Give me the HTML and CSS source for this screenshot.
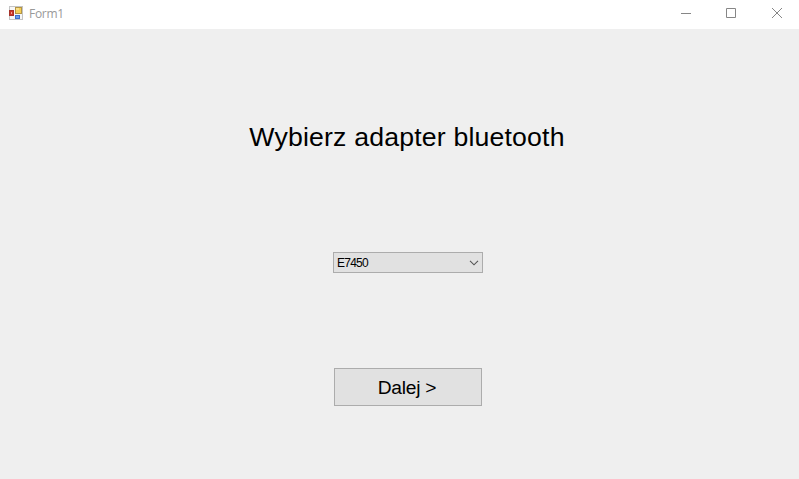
FILE: index.html
```html
<!DOCTYPE html>
<html lang="pl">
<head>
<meta charset="utf-8">
<title>Form1</title>
<link rel="stylesheet" href="styles.css">
</head>
<body>
<div class="window">
  <header class="titlebar">
    <svg class="app-icon" width="14" height="14" viewBox="0 0 14 14" shape-rendering="crispEdges">
      <rect x=".5" y=".5" width="13" height="13" fill="#f7f7f7" stroke="#c4c4c4"/>
      <rect x="6" y="1" width="7" height="7" fill="#b39545"/>
      <rect x="7" y="2" width="5" height="5" fill="#f6cf55"/>
      <rect x="7" y="2" width="3" height="2" fill="#fbe08a"/>
      <rect x="0" y="4" width="5" height="6" fill="#a5322a"/>
      <rect x="1" y="5" width="3" height="4" fill="#cf3527"/>
      <rect x="2" y="6" width="1" height="2" fill="#f0a293"/>
      <rect x="6" y="9" width="5" height="4" fill="#3d70cb"/>
      <rect x="7" y="10" width="3" height="2" fill="#6c9cec"/>
    </svg>
    <span class="title">Form1</span>
    <div class="controls">
      <svg width="46" height="28" viewBox="0 0 46 28"><path d="M18 13.5h10"/></svg>
      <svg width="46" height="28" viewBox="0 0 46 28"><path d="M17.5 8.5h9v9h-9z"/></svg>
      <svg width="46" height="28" viewBox="0 0 46 28"><path d="M17 8l10 10m0-10l-10 10"/></svg>
    </div>
  </header>
  <main class="form">
    <h1 class="heading">Wybierz adapter bluetooth</h1>
    <div class="combo" role="combobox" tabindex="0">
      <span class="combo-value">E7450</span>
      <svg width="10" height="6" viewBox="0 0 10 6"><path d="M1 .8l4 4 4-4" fill="none" stroke="#555" stroke-width="1.1"/></svg>
    </div>
    <button class="next" type="button">Dalej &gt;</button>
  </main>
</div>
</body>
</html>
```
FILE: styles.css
```css
* { box-sizing: border-box; }
body {
  margin: 0;
  font-family: "Liberation Sans", Arial, sans-serif;
  color: #000;
}
.window {
  display: flex;
  flex-direction: column;
  height: 479px;
  background: #efefef;
  overflow: hidden;
}
.titlebar {
  display: flex;
  align-items: flex-start;
  height: 29px;
  padding-left: 9px;
  background: #fff;
}
.app-icon { margin-top: 6px; }
.title {
  margin: 6px 0 0 6px;
  font: 12px/16px "Open Sans", sans-serif;
  letter-spacing: -0.3px;
  color: #999;
}
.controls {
  display: flex;
  margin-left: auto;
  margin-right: -2px;
}
.controls path {
  fill: none;
  stroke: #868686;
  stroke-width: 1;
}
.form {
  display: flex;
  flex-direction: column;
  align-items: center;
  flex: 1;
  padding: 92px 0 0 17px;
}
.heading {
  margin: 0 2px 0 0;
  font-size: 26.67px;
  line-height: 32px;
  font-weight: 400;
  letter-spacing: 0.18px;
  white-space: nowrap;
}
.combo {
  display: flex;
  align-items: center;
  justify-content: space-between;
  width: 150px;
  height: 21px;
  margin-top: 99px;
  padding: 0 3px;
  border: 1px solid #acacac;
  background: #e1e1e1;
}
.combo-value {
  padding-top: 2px;
  font-size: 12px;
  line-height: 15px;
  letter-spacing: -0.75px;
}
.next {
  width: 148px;
  height: 38px;
  margin-top: 95px;
  padding: 1px 2px 0 0;
  border: 1px solid #acacac;
  background: #e1e1e1;
  color: #000;
  font: 19.2px/22px "Liberation Sans", Arial, sans-serif;
  letter-spacing: -0.25px;
}
```
